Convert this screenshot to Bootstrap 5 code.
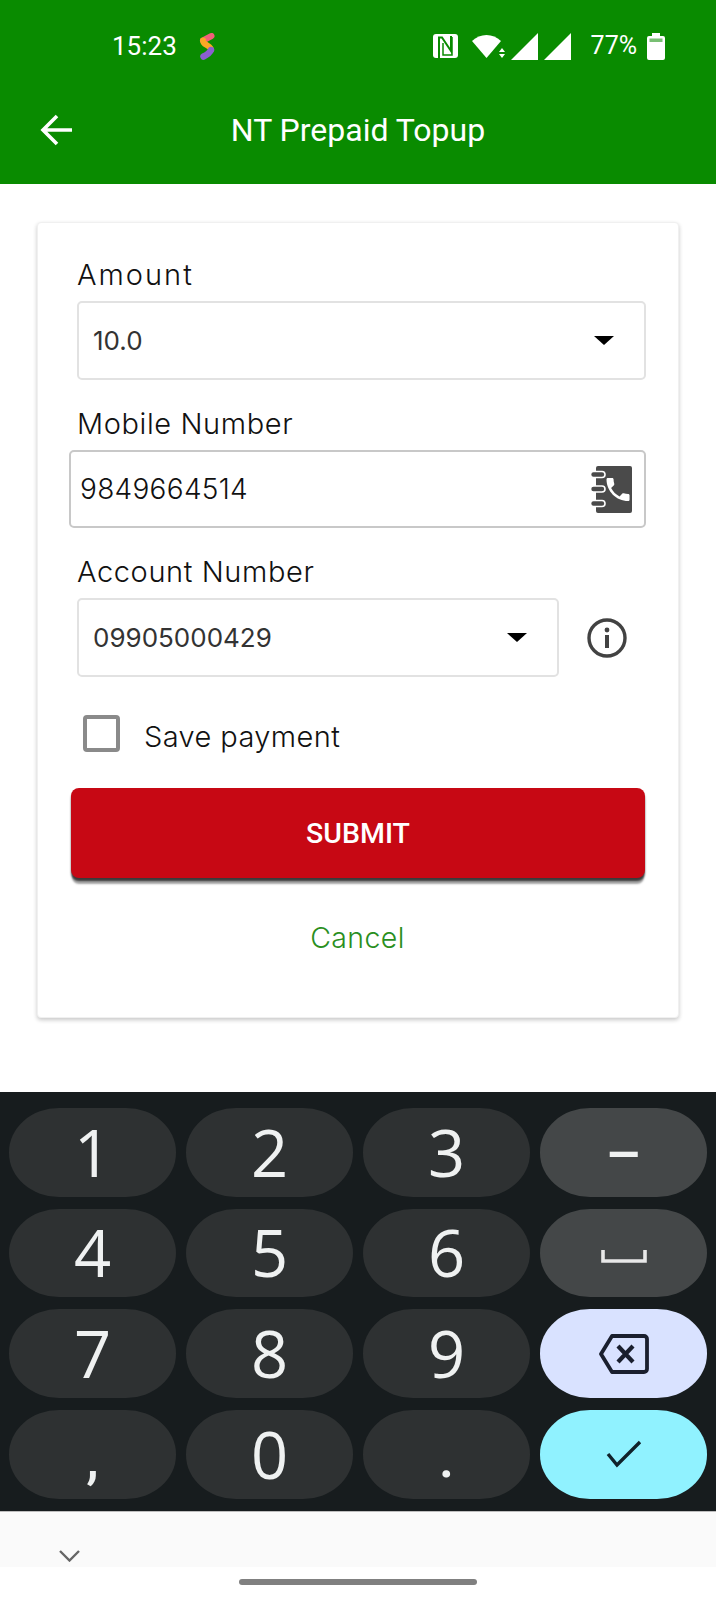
<!DOCTYPE html>
<html lang="en">
<head>
  <meta charset="UTF-8" />
  <meta name="viewport" content="width=device-width, initial-scale=1.0"/>
  <title>NT Prepaid Topup</title>
  <link href="https://cdn.jsdelivr.net/npm/bootstrap@5.3.0/dist/css/bootstrap.min.css" rel="stylesheet" />
  <style>
    html, body { height: 1599px; overflow: hidden; }
    body { background: #fff; font-family: "Inter", "Liberation Sans", sans-serif; }

    .top-green { background: #098b00; height: 184px; color: #fff; font-family: "Roboto", sans-serif; }
    .status-line { height: 92px; padding: 0 51px 0 112px; }
    .status-time { font-size: 26px; width: 87px; }
    .status-pct { font-size: 25px; margin: 0 10px 0 20px; }
    .nfc-svg { margin-right: 14px; }
    .sig-svg { margin-left: 6px; }
    .app-line { height: 75px; padding-left: 40px; }
    .app-title { font-size: 32px; left: 0; right: 0; text-align: center; }

    .pay-area { padding: 38px 37px 0 37px; flex: 1 1 auto; }
    .pay-card { border: 1px solid #f0f0f0; border-radius: 4px; box-shadow: 0 2px 4px rgba(0,0,0,.22); padding: 35px 32px 54px 31px; }
    .fld-label { font-size: 29px; font-weight: 300; color: #111; line-height: 34px; margin: 27px 0 9px 8px; letter-spacing: .6px; }
    .fld-label.first { margin-top: 0; letter-spacing: 2px; }
    .fld-box.form-select { height: 79px; border: 2px solid #e2e2e2; border-radius: 5px; font-size: 26px; color: #333; box-shadow: none; padding: 0 50px 0 14px; background-image: none; font-weight: 400; }
    .select-wrap { margin-left: 8px; }
    .select-wrap::after { content: ""; position: absolute; right: 32px; top: 35px; border-style: solid; border-width: 9px 10px 0 10px; border-color: #000 transparent transparent transparent; pointer-events: none; }
    .phone-box { height: 78px; border: 2px solid #c8c8c8; border-radius: 5px; padding: 0 12px 0 7px; }
    .phone-input { border: 0; outline: 0; flex: 1; min-width: 0; font-size: 28px; font-weight: 300; color: #111; letter-spacing: .3px; }
    .acct-select { width: 482px; }
    .info-svg { margin-left: 28px; }

    .save-row { margin: 38px 0 0 14px; gap: 24px; height: 40px; }
    .save-check.form-check-input { width: 37px; height: 37px; margin: 0; border: 4px solid #8a8a8a; border-radius: 4px; box-shadow: none; }
    .save-text { font-size: 29px; font-weight: 300; color: #111; letter-spacing: .4px; line-height: 37px; margin-top: 3px; }

    .submit-btn.btn { display: block; width: 574px; margin: 33px 0 0 2px; height: 90px; padding-top: 9px; background: #c70814; color: #fff; border: 0; border-radius: 8px; font-family: "Roboto", sans-serif; font-weight: 500; font-size: 28.5px; box-shadow: 0 3px 2px rgba(0,0,0,.65), 0 7px 2px -1px rgba(0,0,0,.35); }
    .cancel-btn.btn { display: block; margin: 35px auto 0; height: 50px; padding: 0 8px; color: #2a8f1e; font-size: 28.5px; font-weight: 300; letter-spacing: .4px; text-decoration: none; border: 0; }

    .kbd-area { background: #171c1e; height: 419px; padding: 16px 9px 12px; display: grid; grid-template-columns: repeat(4, 167px); grid-auto-rows: 88.67px; column-gap: 10px; row-gap: 12px; }
    .kbd-key.btn { background: #2e3132; color: #eff1f1; border: 0; border-radius: 50px / 44px; padding: 0; font-family: "Open Sans", sans-serif; font-weight: 500; font-size: 65px; line-height: 1; display: flex; align-items: center; justify-content: center; }
    .kbd-key.fn-key { background: #444748; font-family: "Roboto", sans-serif; font-size: 56px; padding-top: 6px; }
    .kbd-key.punct-key { font-family: "Roboto", sans-serif; font-size: 56px; padding-top: 8px; }
    .kbd-key.del-key { background: #d9e2ff; }
    .kbd-key.ok-key { background: #90f2ff; }

    .kbd-strip { background: #fafafa; height: 56px; border-top: 1px solid #bdbdbd; padding: 38px 0 0 59px; }
    .home-line { height: 32px; padding-top: 12px; }
    .home-bar { width: 238px; height: 6px; border-radius: 3px; background: #808080; }
    svg { display: block; }
  </style>
</head>
<body class="d-flex flex-column">

  <div class="top-green flex-shrink-0">
    <div class="status-line d-flex align-items-center">
      <span class="status-time">15:23</span>
      <svg width="16" height="27" viewBox="0 0 16 27">
        <path d="M12.5 3 L4 7.5" stroke="#f0607a" stroke-width="6" stroke-linecap="round"/>
        <path d="M4 7.5 C3.5 12 12.5 12.5 12 17" fill="none" stroke="#f9a825" stroke-width="6" stroke-linecap="round"/>
        <path d="M12 17 C10.5 20.5 6.5 22.5 4.5 23.5" fill="none" stroke="#8a5fd0" stroke-width="6.5" stroke-linecap="round"/>
      </svg>
      <div class="ms-auto d-flex align-items-center">
        <svg class="nfc-svg" width="25" height="24" viewBox="0 0 25 24">
          <rect width="25" height="24" rx="3" fill="#fff"/>
          <path d="M6 24V3.5H9L18 17V2" fill="none" stroke="#098b00" stroke-width="2"/>
          <path d="M10 9V21H16L19 21V3" fill="none" stroke="#098b00" stroke-width="1.5"/>
        </svg>
        <svg width="33" height="26" viewBox="0 0 33 26">
          <path d="M14.5 25 L0 8 C8 0 21 0 29 8 Z" fill="#fff"/>
          <path d="M30 15l-3 4h6zM30 25l-3-4h6z" fill="#fff"/>
        </svg>
        <svg class="sig-svg" width="27" height="27" viewBox="0 0 27 27"><path d="M27 0V27H0Z" fill="#fff"/></svg>
        <svg class="sig-svg" width="27" height="27" viewBox="0 0 27 27"><path d="M27 0V27H0Z" fill="#fff"/></svg>
        <span class="status-pct">77%</span>
        <svg width="18" height="27" viewBox="0 0 18 27">
          <path d="M5 0H13V3H16A2 2 0 0 1 18 5V25A2 2 0 0 1 16 27H2A2 2 0 0 1 0 25V5A2 2 0 0 1 2 3H5Z" fill="#fff"/>
          <rect x="2.5" y="5.5" width="13" height="3.5" fill="#098b00" opacity=".55"/>
        </svg>
      </div>
    </div>
    <div class="app-line d-flex align-items-center position-relative">
      <svg width="33" height="32" viewBox="0 0 33 32">
        <path d="M32 16H3M17 2 3 16 17 30" fill="none" stroke="#fff" stroke-width="3.6"/>
      </svg>
      <div class="app-title position-absolute">NT Prepaid Topup</div>
    </div>
  </div>

  <div class="pay-area">
    <div class="card pay-card">
      <div class="fld-label first">Amount</div>
      <div class="select-wrap position-relative">
        <select class="form-select fld-box"><option>10.0</option></select>
      </div>

      <div class="fld-label">Mobile Number</div>
      <div class="phone-box d-flex align-items-center">
        <input class="phone-input" type="tel" value="9849664514">
        <svg width="41" height="47" viewBox="0 0 41 47">
          <rect x="5" y="0" width="36" height="47" rx="2" fill="#4a4a4a"/>
          <g fill="#4a4a4a" stroke="#fff" stroke-width="1.6">
            <rect x="-.5" y="5.5" width="14.5" height="6" rx="3"/>
            <rect x="-.5" y="20" width="14.5" height="6" rx="3"/>
            <rect x="-.5" y="34.5" width="14.5" height="6" rx="3"/>
          </g>
          <path transform="translate(11.66 8.16) scale(1.28)" fill="#fff" d="M6.62 10.79c1.44 2.83 3.76 5.14 6.59 6.59l2.2-2.2c.27-.27.67-.36 1.02-.24 1.12.37 2.33.57 3.57.57.55 0 1 .45 1 1V20c0 .55-.45 1-1 1-9.39 0-17-7.61-17-17 0-.55.45-1 1-1h3.5c.55 0 1 .45 1 1 0 1.25.2 2.45.57 3.57.11.35.03.74-.25 1.02l-2.2 2.2z"/>
        </svg>
      </div>

      <div class="fld-label">Account Number</div>
      <div class="d-flex align-items-center">
        <div class="select-wrap acct-select position-relative">
          <select class="form-select fld-box"><option>09905000429</option></select>
        </div>
        <svg class="info-svg" width="40" height="40" viewBox="0 0 40 40">
          <circle cx="20" cy="20" r="18" fill="none" stroke="#424242" stroke-width="3.4"/>
          <circle cx="20" cy="12" r="2.4" fill="#424242"/>
          <rect x="18" y="17" width="4" height="13" fill="#424242"/>
        </svg>
      </div>

      <div class="save-row d-flex align-items-start">
        <input class="form-check-input save-check" type="checkbox" id="savePay">
        <label class="save-text" for="savePay">Save payment</label>
      </div>

      <button class="btn submit-btn" type="button">SUBMIT</button>
      <button class="btn btn-link cancel-btn" type="button">Cancel</button>
    </div>
  </div>

  <div class="kbd-area flex-shrink-0">
    <button class="btn kbd-key" type="button">1</button>
    <button class="btn kbd-key" type="button">2</button>
    <button class="btn kbd-key" type="button">3</button>
    <button class="btn kbd-key fn-key" type="button">–</button>
    <button class="btn kbd-key" type="button">4</button>
    <button class="btn kbd-key" type="button">5</button>
    <button class="btn kbd-key" type="button">6</button>
    <button class="btn kbd-key fn-key" type="button">
      <svg width="46" height="14" viewBox="0 0 46 14"><path d="M2 1V12H44V1" fill="none" stroke="#e8e8e8" stroke-width="3.6"/></svg>
    </button>
    <button class="btn kbd-key" type="button">7</button>
    <button class="btn kbd-key" type="button">8</button>
    <button class="btn kbd-key" type="button">9</button>
    <button class="btn kbd-key del-key" type="button">
      <svg width="50" height="40" viewBox="0 0 50 40">
        <path d="M13 2H45A3 3 0 0 1 48 5V35A3 3 0 0 1 45 38H13L2 20Z" fill="none" stroke="#1a1f2e" stroke-width="3.8" stroke-linejoin="round"/>
        <path d="M19 12 34 28M34 12 19 28" stroke="#1a1f2e" stroke-width="4.2"/>
      </svg>
    </button>
    <button class="btn kbd-key punct-key" type="button">,</button>
    <button class="btn kbd-key" type="button">0</button>
    <button class="btn kbd-key punct-key" type="button">.</button>
    <button class="btn kbd-key ok-key" type="button">
      <svg width="36" height="28" viewBox="0 0 36 28"><path d="M2 14 11 25 34 2" fill="none" stroke="#10222a" stroke-width="3.4"/></svg>
    </button>
  </div>

  <div class="kbd-strip flex-shrink-0">
    <svg width="21" height="12" viewBox="0 0 21 12"><path d="M1 1 10.5 10.5 20 1" fill="none" stroke="#666" stroke-width="2.4"/></svg>
  </div>
  <div class="home-line d-flex justify-content-center flex-shrink-0">
    <div class="home-bar"></div>
  </div>

  <script src="https://cdn.jsdelivr.net/npm/bootstrap@5.3.0/dist/js/bootstrap.bundle.min.js"></script>
</body>
</html>
